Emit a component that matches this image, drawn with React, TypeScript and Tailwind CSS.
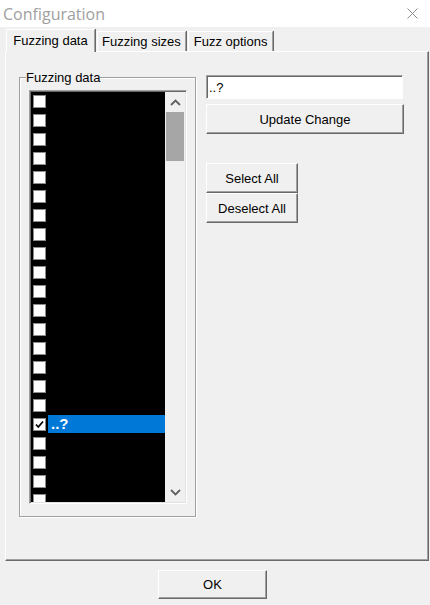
import React from "react";

const rows = Array.from({ length: 22 }, (_, i) => ({ checked: i === 17, label: i === 17 ? "..?" : "" }));

const raised =
  "border-t border-l border-t-white border-l-white border-r border-b border-r-[#696969] border-b-[#696969] shadow-[inset_-1px_-1px_0_#a0a0a0]";

function Chevron({ up }: { up?: boolean }) {
  return (
    <svg width="11" height="7" viewBox="0 0 11 7">
      <polyline
        points={up ? "1,6 5.5,1.5 10,6" : "1,1 5.5,5.5 10,1"}
        fill="none"
        stroke="#606060"
        strokeWidth="1.8"
      />
    </svg>
  );
}

function CheckBox({ checked }: { checked: boolean }) {
  return (
    <div className="w-[13px] h-[13px] shrink-0 bg-white border border-[#8c8c8c] flex items-center justify-center">
      {checked && (
        <svg width="9" height="9" viewBox="0 0 9 9">
          <polyline points="1,4.5 3.3,7 8,1.5" fill="none" stroke="#000" strokeWidth="1.8" />
        </svg>
      )}
    </div>
  );
}

function Button({ label, className }: { label: string; className: string }) {
  return (
    <button className={`${raised} ${className} bg-[#f0f0f0] text-[13px] text-black flex items-center justify-center`}>
      {label}
    </button>
  );
}

export default function App() {
  return (
    <div
      className="w-[430px] h-[605px] bg-[#f0f0f0] flex flex-col overflow-hidden"
      style={{ fontFamily: '"Liberation Sans", Arial, sans-serif' }}
    >
      {/* title bar */}
      <div className="h-[27px] bg-white flex items-center justify-between pl-[3px] pr-[12px]">
        <span
          className="text-[16px] leading-[22px] text-[#a0a0a0]"
          style={{ fontFamily: '"Open Sans", "Noto Sans", sans-serif' }}
        >
          Configuration
        </span>
        <svg width="11" height="11" viewBox="0 0 11 11">
          <path d="M0.5 0.5 L10.5 10.5 M10.5 0.5 L0.5 10.5" stroke="#8a8a8a" strokeWidth="1" />
        </svg>
      </div>

      {/* tabs */}
      <div className="h-[25px] -mb-px relative z-10 flex items-end pl-[6px] text-[13px] leading-[15px] text-black">
        <div className="w-[89px] h-[23px] bg-[#f0f0f0] border-t border-l border-white border-r border-r-[#a0a0a0] shadow-[1px_0_0_#696969] pt-[3px] flex justify-center">
          Fuzzing data
        </div>
        <div className="mb-px ml-[2px] h-[20px] px-[4px] border-t border-l border-white border-r border-r-[#a0a0a0] shadow-[1px_0_0_#696969] pt-[2px]">
          Fuzzing sizes
        </div>
        <div className="mb-px ml-[2px] h-[20px] px-[5px] border-t border-l border-white border-r border-r-[#a0a0a0] shadow-[1px_0_0_#696969] pt-[2px]">
          Fuzz options
        </div>
      </div>

      {/* tab panel */}
      <div className="ml-[5px] w-[424px] h-[510px] border-t border-l border-white border-r border-b border-r-[#696969] border-b-[#696969] shadow-[inset_-1px_-1px_0_#a0a0a0] flex items-start text-[13px] leading-[15px] text-black">
        <fieldset className="ml-[13px] mt-[18px] w-[177px] border border-[#a0a0a0] shadow-[1px_1px_0_white,inset_1px_1px_0_white]">
          <legend className="ml-[6px] bg-[#f0f0f0] leading-[15px]">Fuzzing data</legend>
          <div className="ml-[9px] mt-[5px] mb-[12px] w-[158px] h-[414px] border-t border-l border-[#a0a0a0] border-r border-b border-r-white border-b-white shadow-[inset_1px_1px_0_#696969,inset_-1px_-1px_0_#e3e3e3] p-px flex">
            <div className="w-[134px] bg-black overflow-hidden flex flex-col">
              {rows.map((r, i) => (
                <div key={i} className="h-[19px] shrink-0 flex items-center pl-[2px]">
                  <CheckBox checked={r.checked} />
                  {r.label && (
                    <div className="ml-[2px] flex-1 h-[18px] self-start bg-[#0078d7] text-white font-bold text-[15px] leading-[18px] pl-[3px]">
                      {r.label}
                    </div>
                  )}
                </div>
              ))}
            </div>
            <div className="w-[20px] bg-[#f0f0f0] flex flex-col">
              <div className="h-[20px] flex items-center justify-center">
                <Chevron up />
              </div>
              <div className="mx-px h-[49px] bg-[#a6a6a6]" />
              <div className="mt-auto h-[20px] flex items-center justify-center">
                <Chevron />
              </div>
            </div>
          </div>
        </fieldset>

        <div className="ml-[10px] mt-[23px] flex flex-col items-start">
          <div className="w-[197px] h-[24px] bg-white border-t border-l border-[#a0a0a0] border-r border-b border-r-white border-b-white shadow-[inset_1px_1px_0_#696969] pl-[2px] flex items-center">
            ..?
          </div>
          <Button label="Update Change" className="mt-[5px] w-[198px] h-[30px]" />
          <Button label="Select All" className="mt-[29px] w-[92px] h-[30px]" />
          <Button label="Deselect All" className="w-[92px] h-[30px]" />
        </div>
      </div>

      {/* footer */}
      <div className="mt-[9px] ml-[158px]">
        <Button label="OK" className="w-[109px] h-[29px]" />
      </div>
    </div>
  );
}
